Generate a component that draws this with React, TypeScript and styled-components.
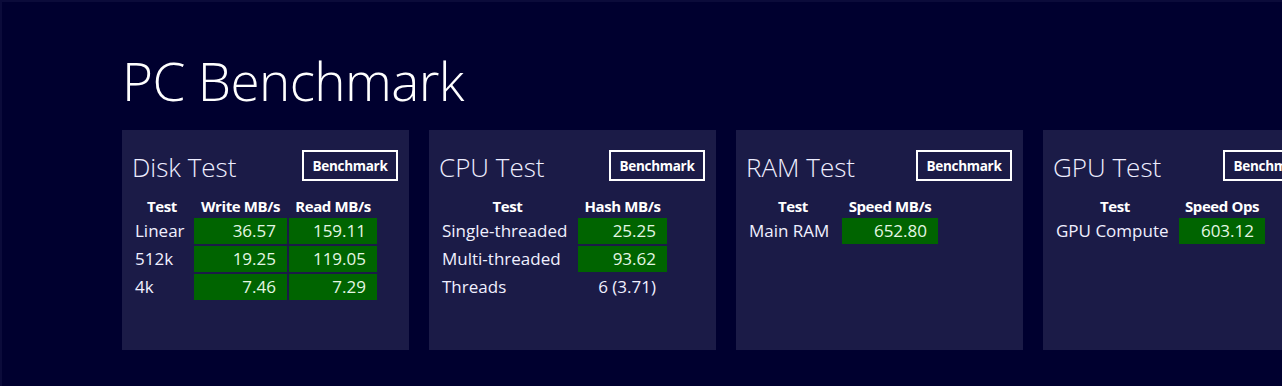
import React from "react";
import styled, { createGlobalStyle } from "styled-components";

const Global = createGlobalStyle`
  html, body { margin: 0; padding: 0; background: #ffffff; }
  body { font-family: "Open Sans", "Noto Sans", sans-serif; }
`;

const Frame = styled.div`
  width: 1282px;
  height: 386px;
  box-sizing: border-box;
  background: #00002f;
  border-top: 2px solid #0b0b3a;
  border-left: 2px solid #0b0b3a;
  overflow: hidden;
  padding: 0 0 0 120px;
`;

const Title = styled.h1`
  margin: 0;
  padding-top: 44px;
  height: 84px;
  box-sizing: border-box;
  font-family: "Open Sans", sans-serif;
  font-weight: 300;
  font-size: 53px;
  letter-spacing: -0.6px;
  line-height: 70px;
  color: #ffffff;
  white-space: nowrap;
`;

const Row = styled.div`
  display: flex;
  gap: 20px;
  margin-top: 44px;
`;

const Card = styled.section`
  flex: 0 0 287px;
  height: 220px;
  box-sizing: border-box;
  background: #1b1b47;
  padding: 20px 11px 0 10px;
`;

const CardHead = styled.div`
  display: flex;
  justify-content: space-between;
  align-items: flex-start;
  height: 46px;
`;

const CardTitle = styled.h2`
  margin: 0;
  font-weight: 300;
  font-size: 26px;
  line-height: 34px;
  color: #eeeeff;
  white-space: nowrap;
`;

const Button = styled.button`
  width: 96px;
  height: 31px;
  box-sizing: border-box;
  border: 2px solid #ffffff;
  background: transparent;
  color: #ffffff;
  font-family: "Open Sans", sans-serif;
  font-weight: 700;
  font-size: 13.5px;
  letter-spacing: -0.3px;
  padding: 0;
  white-space: nowrap;
`;

const Table = styled.table`
  border-collapse: separate;
  border-spacing: 2px;
  margin: -2px 0 0 -2px;
  table-layout: fixed;
`;

const Th = styled.th`
  font-weight: 700;
  font-size: 15px;
  letter-spacing: -0.4px;
  line-height: 20px;
  color: #ffffff;
  text-align: center;
  padding: 0;
  white-space: nowrap;
`;

const Label = styled.td`
  font-size: 17px;
  line-height: 26px;
  height: 26px;
  color: #f0f0ff;
  padding: 0 0 0 3px;
  white-space: nowrap;
`;

const Value = styled.td<{ $green?: boolean }>`
  font-size: 17px;
  line-height: 26px;
  height: 26px;
  padding: 0 11px 0 0;
  text-align: right;
  white-space: nowrap;
  background: ${(p) => (p.$green ? "#006400" : "transparent")};
  color: ${(p) => (p.$green ? "#e4f7e4" : "#f0f0ff")};
`;

type Cell = { v: string; green?: boolean };
type TestDef = {
  title: string;
  cols: number[];
  heads: string[];
  rows: { label: string; cells: Cell[] }[];
};

const tests: TestDef[] = [
  {
    title: "Disk Test",
    cols: [60, 93, 88],
    heads: ["Test", "Write MB/s", "Read MB/s"],
    rows: [
      { label: "Linear", cells: [{ v: "36.57", green: true }, { v: "159.11", green: true }] },
      { label: "512k", cells: [{ v: "19.25", green: true }, { v: "119.05", green: true }] },
      { label: "4k", cells: [{ v: "7.46", green: true }, { v: "7.29", green: true }] },
    ],
  },
  {
    title: "CPU Test",
    cols: [137, 89],
    heads: ["Test", "Hash MB/s"],
    rows: [
      { label: "Single-threaded", cells: [{ v: "25.25", green: true }] },
      { label: "Multi-threaded", cells: [{ v: "93.62", green: true }] },
      { label: "Threads", cells: [{ v: "6 (3.71)" }] },
    ],
  },
  {
    title: "RAM Test",
    cols: [94, 96],
    heads: ["Test", "Speed MB/s"],
    rows: [{ label: "Main RAM", cells: [{ v: "652.80", green: true }] }],
  },
  {
    title: "GPU Test",
    cols: [124, 86],
    heads: ["Test", "Speed Ops"],
    rows: [{ label: "GPU Compute", cells: [{ v: "603.12", green: true }] }],
  },
];

export default function App() {
  return (
    <>
      <Global />
      <Frame>
        <Title>PC Benchmark</Title>
        <Row>
          {tests.map((t) => (
            <Card key={t.title}>
              <CardHead>
                <CardTitle>{t.title}</CardTitle>
                <Button>Benchmark</Button>
              </CardHead>
              <Table>
                <colgroup>
                  {t.cols.map((w, i) => (
                    <col key={i} style={{ width: w }} />
                  ))}
                </colgroup>
                <thead>
                  <tr>
                    {t.heads.map((h) => (
                      <Th key={h}>{h}</Th>
                    ))}
                  </tr>
                </thead>
                <tbody>
                  {t.rows.map((r) => (
                    <tr key={r.label}>
                      <Label>{r.label}</Label>
                      {r.cells.map((c, i) => (
                        <Value key={i} $green={c.green}>
                          {c.v}
                        </Value>
                      ))}
                    </tr>
                  ))}
                </tbody>
              </Table>
            </Card>
          ))}
        </Row>
      </Frame>
    </>
  );
}
